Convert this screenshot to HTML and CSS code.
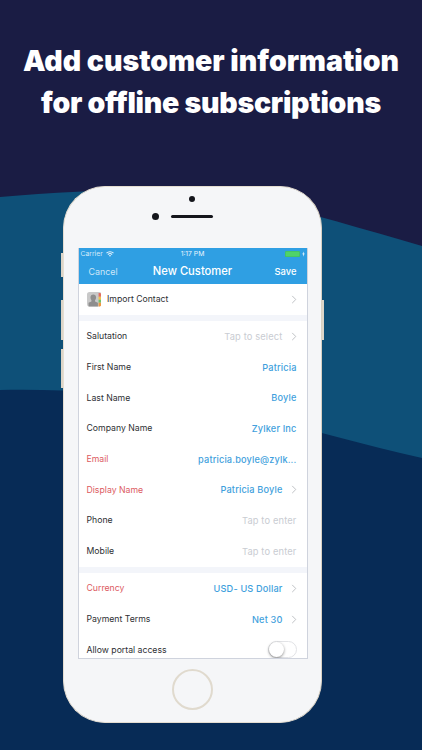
FILE: index.html
```html
<!DOCTYPE html>
<html lang="en">
<head>
<meta charset="utf-8">
<title>New Customer</title>
<link rel="stylesheet" href="styles.css">
</head>
<body>
<div class="page">
  <svg class="waves" viewBox="0 0 422 750" aria-hidden="true">
    <path class="wave-teal" d="M0 197C60 192 130 188 190 190C250 195 340 222 422 246V750H0Z"/>
    <path class="wave-navy" d="M0 390C60 389 120 392 190 402C260 414 340 440 422 458V750H0Z"/>
  </svg>
  <h1 class="headline"><span class="line-one">Add customer information</span><span class="line-two">for offline subscriptions</span></h1>
  <div class="phone">
    <span class="side side-a"></span>
    <span class="side side-b"></span>
    <span class="side side-c"></span>
    <span class="side side-d"></span>
    <div class="earpiece">
      <span class="sensor"></span>
      <div class="speaker-row">
        <span class="camera"></span>
        <span class="speaker"></span>
      </div>
    </div>
    <div class="screen">
      <header class="nav">
        <div class="status">
          <span class="carrier">Carrier
            <svg class="wifi" viewBox="0 0 12 9"><path d="M6 8.6 4.4 6.9a2.3 2.3 0 0 1 3.2 0ZM3.4 5.9 2.3 4.7a5.3 5.3 0 0 1 7.4 0L8.6 5.9a3.7 3.7 0 0 0-5.2 0ZM1.3 3.7.2 2.6a8.2 8.2 0 0 1 11.6 0l-1.1 1.1a6.7 6.7 0 0 0-9.4 0Z"/></svg>
          </span>
          <span class="clock">1:17 PM</span>
          <span class="power">
            <span class="battery"></span>
            <svg class="bolt" viewBox="0 0 4 7"><path d="M2.4 0 .3 3.9h1.3L1.3 7l2.4-4.1H2.3Z"/></svg>
          </span>
        </div>
        <div class="navbar">
          <span class="nav-cancel">Cancel</span>
          <span class="nav-title">New Customer</span>
          <span class="nav-save">Save</span>
        </div>
      </header>
      <section class="group group-import">
        <div class="row row-import">
          <span class="label label-icon">
            <svg class="contact-icon" viewBox="0 0 15 15">
              <rect width="15" height="15" rx="2.6" fill="#c9c9c9"/>
              <path d="M12 1h1a2 2 0 0 1 1.9 1.9V5H12Z" fill="#e46c5e"/>
              <path d="M12 5h3v3h-3Z" fill="#f1c14a"/>
              <path d="M12 8h3v3h-3Z" fill="#6fc36a"/>
              <path d="M12 11h3v1.4A2.6 2.6 0 0 1 12.6 15H12Z" fill="#f0973f"/>
              <path d="M6.5 2.6c1.8 0 2.9 1.2 2.9 3.1 0 1.2-.5 2.2-1.1 2.9v1.2l3 1.4V15H1.6v-3.8l3-1.4V8.6C4 7.9 3.6 6.9 3.6 5.7c0-1.9 1.1-3.1 2.9-3.1Z" fill="#8e8e8e"/>
            </svg>
            Import Contact
          </span>
          <svg class="chevron" viewBox="0 0 6 10"><path d="M1 1l4 4-4 4"/></svg>
        </div>
      </section>
      <section class="group">
        <div class="row"><span class="label">Salutation</span><span class="value hint">Tap to select</span><svg class="chevron" viewBox="0 0 6 10"><path d="M1 1l4 4-4 4"/></svg></div>
        <div class="row"><span class="label">First Name</span><span class="value">Patricia</span></div>
        <div class="row"><span class="label">Last Name</span><span class="value">Boyle</span></div>
        <div class="row"><span class="label">Company Name</span><span class="value">Zylker Inc</span></div>
        <div class="row"><span class="label required">Email</span><span class="value">patricia.boyle@zylk...</span></div>
        <div class="row"><span class="label required">Display Name</span><span class="value">Patricia Boyle</span><svg class="chevron" viewBox="0 0 6 10"><path d="M1 1l4 4-4 4"/></svg></div>
        <div class="row"><span class="label">Phone</span><span class="value hint">Tap to enter</span></div>
        <div class="row"><span class="label">Mobile</span><span class="value hint">Tap to enter</span></div>
      </section>
      <section class="group">
        <div class="row"><span class="label required">Currency</span><span class="value">USD- US Dollar</span><svg class="chevron" viewBox="0 0 6 10"><path d="M1 1l4 4-4 4"/></svg></div>
        <div class="row"><span class="label">Payment Terms</span><span class="value">Net 30</span><svg class="chevron" viewBox="0 0 6 10"><path d="M1 1l4 4-4 4"/></svg></div>
        <div class="row"><span class="label">Allow portal access</span><span class="toggle"><span class="knob"></span></span></div>
      </section>
    </div>
    <div class="home-area"><span class="home"></span></div>
  </div>
</div>
</body>
</html>
```

FILE: styles.css
```css
* { box-sizing: border-box; }
html, body { margin: 0; padding: 0; }
body { width: 422px; height: 750px; overflow: hidden; font-family: Inter, "Liberation Sans", sans-serif; }

.page {
  position: relative;
  width: 422px;
  height: 750px;
  overflow: hidden;
  background: #1a1c44;
  display: flex;
  flex-direction: column;
}
.waves { position: absolute; inset: 0; width: 422px; height: 750px; }
.wave-teal { fill: #0e5078; }
.wave-navy { fill: #072b56; }

.headline {
  position: relative;
  margin: 40px 0 0;
  width: 422px;
  height: 146px;
  display: flex;
  flex-direction: column;
  align-items: center;
  color: #fff;
  font-size: 28.5px;
  line-height: 42px;
  font-weight: 900;
  white-space: nowrap;
}
.line-one { letter-spacing: 0; }
.line-two { letter-spacing: -0.25px; }

.phone {
  position: relative;
  width: 259px;
  height: 537px;
  margin-left: 63px;
  background: #f5f6f8;
  border: 1.5px solid #e4ddd1;
  border-right-color: #d8d0c2;
  border-radius: 42px;
  display: flex;
  flex-direction: column;
  align-items: center;
}
.side { position: absolute; width: 2px; background: #dcd5c8; }
.side-a { left: -3px; top: 66px; height: 24px; }
.side-b { left: -3px; top: 113px; height: 40px; }
.side-c { left: -3px; top: 162px; height: 39px; }
.side-d { right: -3px; top: 113px; height: 40px; }

.earpiece {
  height: 60.5px;
  width: 100%;
  position: relative;
  flex: none;
}
.sensor { position: absolute; left: 125px; top: 9px; width: 6px; height: 6px; border-radius: 50%; background: #15161c; }
.speaker-row { display: flex; align-items: center; gap: 12px; position: absolute; left: 88px; top: 26px; }
.camera { width: 7px; height: 7px; border-radius: 50%; background: #15161c; }
.speaker { width: 42px; height: 3px; border-radius: 2px; background: #15161c; }

.screen {
  width: 230px;
  height: 411px;
  flex: none;
  background: #f3f5fa;
  border: 1px solid #cfd3dd;
  border-top: 0;
  overflow: hidden;
  display: flex;
  flex-direction: column;
  font-size: 8.7px;
}

.nav { height: 36.5px; flex: none; background: #2f9fe3; color: #fff; margin: 0 -1px; }
.status {
  height: 12px;
  padding: 0 3px 0 3px;
  display: grid;
  grid-template-columns: 1fr auto 1fr;
  align-items: center;
  font-size: 6.8px;
  color: #d5ebfa;
}
.carrier { display: flex; align-items: center; gap: 3px; }
.wifi { width: 8px; height: 6px; fill: #e6f3fc; }
.clock { color: #eaf5fd; }
.power { display: flex; justify-content: flex-end; align-items: center; gap: 2px; }
.battery { width: 15px; height: 6px; border-radius: 1.5px; background: #4fd36a; box-shadow: inset 0 0 0 0.5px #3fb95f; }
.bolt { width: 3px; height: 6px; fill: #e6f3fc; }

.navbar {
  height: 24px;
  padding: 0 11px;
  display: grid;
  grid-template-columns: 1fr auto 1fr;
  align-items: center;
  font-size: 9.4px;
}
.nav-cancel { color: #cde6f8; font-size: 8.9px; }
.nav-title { font-size: 11.2px; font-weight: 500; position: relative; top: -1px; }
.nav-save { text-align: right; font-weight: 500; }

.group { background: #fff; flex: none; margin-bottom: 6.5px; }
.row {
  height: 30.7px;
  padding: 0 10px 0 8px;
  display: flex;
  align-items: center;
  gap: 7px;
}
.row-import { height: 30.5px; }
.label { margin-right: auto; color: #2e2f33; white-space: nowrap; }
.label-icon { display: flex; align-items: center; gap: 6px; }
.contact-icon { width: 14.5px; height: 14.5px; flex: none; }
.required { color: #dc5b5f; }
.value { color: #3f9fdd; font-size: 9.2px; letter-spacing: 0.15px; font-weight: 500; white-space: nowrap; }
.hint { color: #c9ccd2; font-size: 9.3px; font-weight: 400; }
.chevron { width: 6px; height: 9px; flex: none; fill: none; stroke: #b9bbc0; stroke-width: 1; margin-left: 1px; }

.toggle {
  width: 29px;
  height: 17px;
  border-radius: 9px;
  border: 1px solid #e2e3e6;
  background: #fff;
  display: flex;
  align-items: center;
}
.knob { width: 15px; height: 15px; border-radius: 50%; background: #fff; box-shadow: 0 1px 3px rgba(0, 0, 0, 0.45); }

.home-area { flex: 1; display: flex; align-items: center; justify-content: center; width: 100%; padding-bottom: 1px; }
.home { width: 41px; height: 41px; border-radius: 50%; border: 2.5px solid #e0dace; }
```
